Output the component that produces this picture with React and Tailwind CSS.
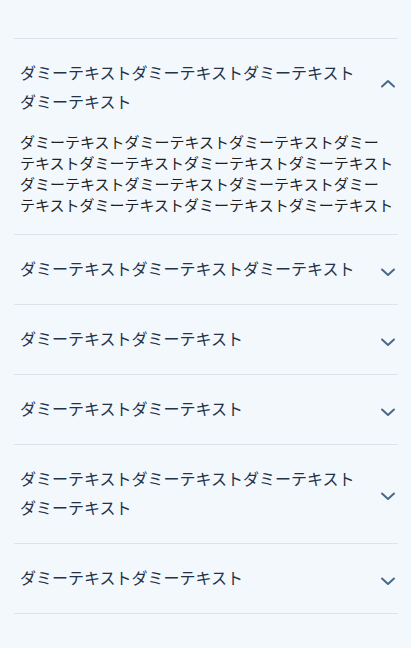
import React, { useState } from 'react';

const unit = 'ダミーテキスト';

const faqs = [
    {
        q: unit.repeat(4),
        a: [
            'ダミーテキストダミーテキストダミーテキストダミー',
            'テキストダミーテキストダミーテキストダミーテキスト',
            'ダミーテキストダミーテキストダミーテキストダミー',
            'テキストダミーテキストダミーテキストダミーテキスト',
        ],
    },
    { q: unit.repeat(3), a: [unit.repeat(3)] },
    { q: unit.repeat(2), a: [unit.repeat(3)] },
    { q: unit.repeat(2), a: [unit.repeat(3)] },
    { q: unit.repeat(4), a: [unit.repeat(3)] },
    { q: unit.repeat(2), a: [unit.repeat(3)] },
];

const Chevron = ({ open }) => (
    <svg
        width="20"
        height="20"
        viewBox="0 0 20 20"
        className={open ? 'rotate-180' : ''}
        fill="none"
        stroke="#4a6889"
        strokeWidth="2"
        strokeLinecap="round"
        strokeLinejoin="round"
    >
        <path d="M4 10.5l6 5.5 6-5.5" />
    </svg>
);

const App = () => {
    const [openIndex, setOpenIndex] = useState(0);

    return (
        <div
            className="min-h-[648px] bg-[#f3f8fd] pt-[38px] pl-[14px] pr-[13px]"
            style={{ fontFamily: '"Noto Sans CJK JP", "Noto Sans", sans-serif' }}
        >
            <div className="border-t border-[#dde3ea]">
                {faqs.map((item, index) => {
                    const open = openIndex === index;
                    return (
                        <div key={index} className="border-b border-[#dde3ea]">
                            <button
                                type="button"
                                onClick={() => setOpenIndex(open ? -1 : index)}
                                className={`w-full flex items-center gap-[16px] pl-[6px] text-left pt-[19px] ${open ? 'pb-[15px]' : 'pb-[21px]'}`}
                            >
                                <span className="flex-1 text-[16px] leading-[29px] font-normal text-[#233248]">
                                    {item.q}
                                </span>
                                <span className="w-[20px] h-[20px] shrink-0 flex items-center justify-center">
                                    <Chevron open={open} />
                                </span>
                            </button>
                            {open && (
                                <p className="pl-[6px] pb-[19px] text-[15px] leading-[21px] text-[#1f1f1f]">
                                    {item.a.map((line, i) => (
                                        <React.Fragment key={i}>
                                            {line}
                                            {i < item.a.length - 1 && <br />}
                                        </React.Fragment>
                                    ))}
                                </p>
                            )}
                        </div>
                    );
                })}
            </div>
        </div>
    );
};

export default App;
